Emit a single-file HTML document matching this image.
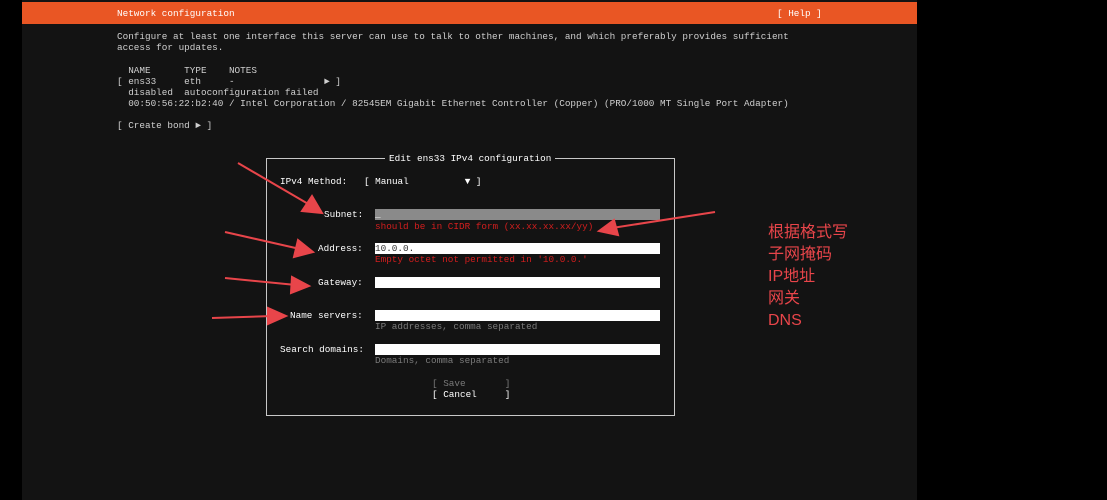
<!DOCTYPE html>
<html><head><meta charset="utf-8"><style>
*{margin:0;padding:0}
body{width:1107px;height:500px;background:#000;position:relative;overflow:hidden;font-family:"Liberation Mono",monospace;font-size:9.33px;color:#cfcfcf}
.p{position:absolute;left:22px;top:0;width:895px;height:500px;background:#131313}
.bar{position:absolute;left:22px;top:2px;width:895px;height:22px;background:#e95624}
.t{position:absolute;white-space:pre;line-height:11px}
.w{color:#fff}
.f{position:absolute;left:375px;width:285px;height:11px;background:#fff}
.r{color:#d21e1e}
.g{color:#7a7a7a}
.box{position:absolute;left:266px;top:158px;width:407px;height:256px;border:1px solid #c8c8c8}
.cn{position:absolute;left:768px;font-family:"Liberation Sans","Noto Sans CJK SC",sans-serif;font-size:16px;color:#e8454a;line-height:22px}
</style></head><body>
<div class="p"></div>
<div class="bar"></div>
<div class="t w" style="left:117px;top:8px">Network configuration</div>
<div class="t w" style="left:777px;top:8px">[ Help ]</div>
<div class="t" style="left:117px;top:31px">Configure at least one interface this server can use to talk to other machines, and which preferably provides sufficient
access for updates.</div>
<div class="t" style="left:117px;top:65px">  NAME      TYPE    NOTES
[ ens33     eth     -                ► ]
  disabled  autoconfiguration failed
  00:50:56:22:b2:40 / Intel Corporation / 82545EM Gigabit Ethernet Controller (Copper) (PRO/1000 MT Single Port Adapter)</div>
<div class="t" style="left:117px;top:120px">[ Create bond ► ]</div>
<div class="box"></div>
<div class="t w" style="left:385px;top:153px;background:#131313;padding:0 4px">Edit ens33 IPv4 configuration</div>
<div class="t w" style="left:280px;top:176px">IPv4 Method:   [ Manual          ▼ ]</div>
<div class="t w" style="left:324px;top:209px">Subnet:</div>
<div class="f" style="top:209px;background:#8a8a8a"></div>
<div class="t w" style="left:375px;top:209px">_</div>
<div class="t r" style="left:375px;top:221px">should be in CIDR form (xx.xx.xx.xx/yy)</div>
<div class="t w" style="left:318px;top:243px">Address:</div>
<div class="f" style="top:243px"></div>
<div class="t" style="left:375px;top:243px;color:#333">10.0.0.</div>
<div class="t r" style="left:375px;top:254px">Empty octet not permitted in '10.0.0.'</div>
<div class="t w" style="left:318px;top:277px">Gateway:</div>
<div class="f" style="top:277px"></div>
<div class="t w" style="left:290px;top:310px">Name servers:</div>
<div class="f" style="top:310px"></div>
<div class="t g" style="left:375px;top:321px">IP addresses, comma separated</div>
<div class="t w" style="left:280px;top:344px">Search domains:</div>
<div class="f" style="top:344px"></div>
<div class="t g" style="left:375px;top:355px">Domains, comma separated</div>
<div class="t g" style="left:432px;top:378px">[ Save       ]</div>
<div class="t w" style="left:432px;top:389px">[ Cancel     ]</div>
<div class="cn" style="top:222px">根据格式写<br>子网掩码<br>IP地址<br>网关<br>DNS</div>
<svg style="position:absolute;left:0;top:0" width="1107" height="500">
<g stroke="#e8454a" stroke-width="2" fill="#e8454a">
<line x1="238" y1="163" x2="310" y2="205"/><polygon points="322,213 302,211 312,196"/>
<line x1="225" y1="232" x2="300" y2="249"/><polygon points="313,252 294,257 298,240"/>
<line x1="225" y1="278" x2="296" y2="285"/><polygon points="309,286 291,293 292,277"/>
<line x1="212" y1="318" x2="273" y2="316"/><polygon points="286,316 268,324 268,308"/>
<line x1="715" y1="212" x2="612" y2="228"/><polygon points="599,231 614,220 618,235"/>
</g></svg>
</body></html>
